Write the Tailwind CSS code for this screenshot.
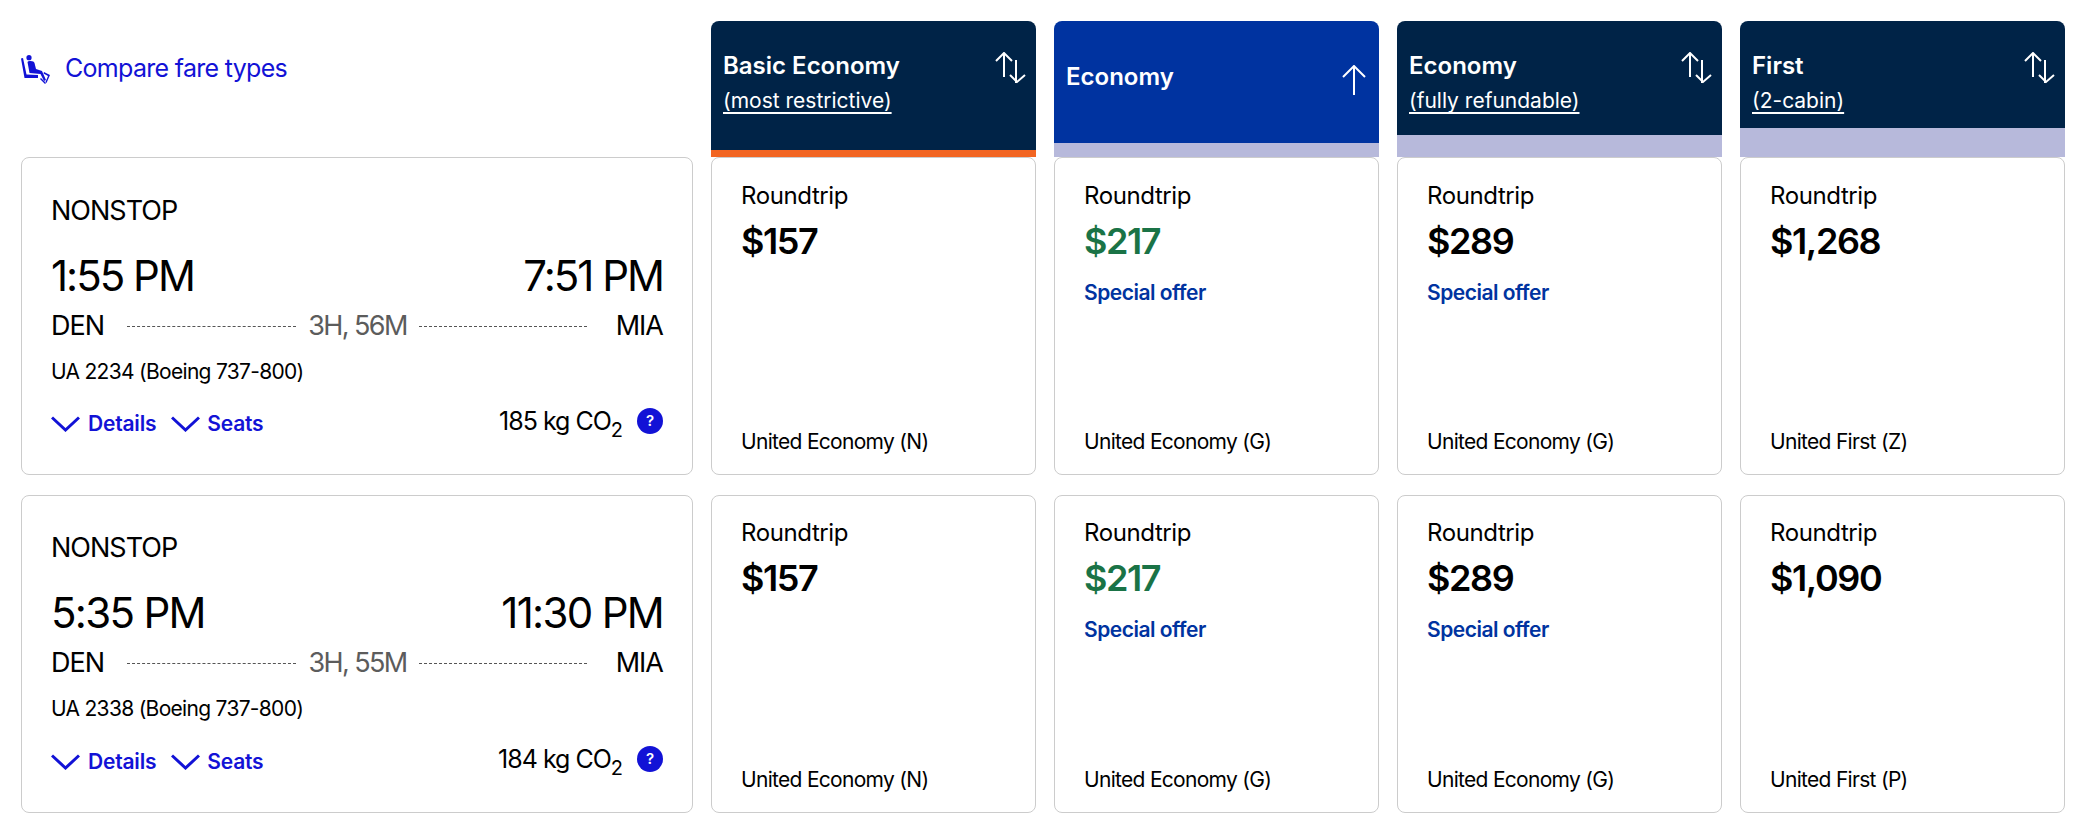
<!DOCTYPE html>
<html lang="en">
<head>
  <meta charset="UTF-8" />
  <title>Flight results</title>
  <script src="https://cdn.jsdelivr.net/npm/@tailwindcss/browser@4"></script>
</head>
<body class="bg-white font-['Inter',sans-serif] text-black overflow-hidden">
  <div class="grid grid-cols-[672px_repeat(4,325px)] gap-x-[18px] pl-[21px] pt-[21px]">

    <!-- Header row -->
    <a href="#" class="flex items-center gap-[14px] h-[136px] pb-[40px] text-[#1212d6] text-[25px] font-normal tracking-[-0.7px]">
      <svg class="w-[30px] h-[30px]" viewBox="3 3 30 30" fill="currentColor"><circle cx="11" cy="6.7" r="2.6"/><path d="M3 7.5 L5 7 L8.5 23.5 L20 24 L20 27 L6.5 27 Z"/><path d="M9.5 11 Q10 9.8 12.5 10 Q16 10 16.5 12 L18 18 L24 20 L28 29 L26 30 L22.5 23 L11.5 22 Z"/><path d="M23 27 L28 32 L27 33 L22 28 Z"/><path d="M26 21 L32 24 L28.5 32 L27.5 31 L30 25 L25.5 22.5 Z"/></svg>
      <span>Compare fare types</span>
    </a>

    <div class="flex flex-col h-[136px]">
      <div class="flex-1 bg-[#002347] rounded-t-lg text-white flex justify-between pl-[12px] pr-[9px] pt-[30px]">
        <div>
          <div class="text-[24px] leading-[30px] font-semibold">Basic Economy</div>
          <div class="text-[21px] leading-[26px] mt-[7px] underline decoration-2 underline-offset-[4px]">(most restrictive)</div>
        </div>
        <svg class="w-[32px] h-[32px] mt-[1px]" viewBox="0 0 32 32" fill="none" stroke="currentColor" stroke-width="2"><path d="M1 9 L9 1 L17 9 M9 1 V25"/><path d="M21 8 V31 M15 23 L22 30 L30 23"/></svg>
      </div>
      <div class="h-[7px] bg-[#f26522]"></div>
    </div>

    <div class="flex flex-col h-[136px]">
      <div class="flex-1 bg-[#0033a0] rounded-t-lg text-white flex justify-between items-start pl-[12px] pr-[12px] pt-[41px]">
        <div class="text-[24px] leading-[30px] font-semibold">Economy</div>
        <svg class="w-[26px] h-[30px] mt-[3px]" viewBox="0 0 26 30" fill="none" stroke="currentColor" stroke-width="2"><path d="M2 12 L13 1 L24 12 M13 1 V30"/></svg>
      </div>
      <div class="h-[14px] bg-[#b7b9db]"></div>
    </div>

    <div class="flex flex-col h-[136px]">
      <div class="flex-1 bg-[#002347] rounded-t-lg text-white flex justify-between pl-[12px] pr-[9px] pt-[30px]">
        <div>
          <div class="text-[24px] leading-[30px] font-semibold">Economy</div>
          <div class="text-[21px] leading-[26px] mt-[7px] underline decoration-2 underline-offset-[4px]">(fully refundable)</div>
        </div>
        <svg class="w-[32px] h-[32px] mt-[1px]" viewBox="0 0 32 32" fill="none" stroke="currentColor" stroke-width="2"><path d="M1 9 L9 1 L17 9 M9 1 V25"/><path d="M21 8 V31 M15 23 L22 30 L30 23"/></svg>
      </div>
      <div class="h-[22px] bg-[#b7b9db]"></div>
    </div>

    <div class="flex flex-col h-[136px]">
      <div class="flex-1 bg-[#002347] rounded-t-lg text-white flex justify-between pl-[12px] pr-[9px] pt-[30px]">
        <div>
          <div class="text-[24px] leading-[30px] font-semibold">First</div>
          <div class="text-[21px] leading-[26px] mt-[7px] underline decoration-2 underline-offset-[4px]">(2-cabin)</div>
        </div>
        <svg class="w-[32px] h-[32px] mt-[1px]" viewBox="0 0 32 32" fill="none" stroke="currentColor" stroke-width="2"><path d="M1 9 L9 1 L17 9 M9 1 V25"/><path d="M21 8 V31 M15 23 L22 30 L30 23"/></svg>
      </div>
      <div class="h-[29px] bg-[#b7b9db]"></div>
    </div>

    <!-- Flight 1 -->
    <div class="h-[318px] border border-[#cccccc] rounded-lg pl-[29px] pr-[29px] pt-[36px] flex flex-col">
      <div class="text-[27px] leading-[34px] tracking-[-1px]">NONSTOP</div>
      <div class="flex justify-between mt-[22px] text-[42px] leading-[52px] tracking-[-2px]"><span>1:55 PM</span><span>7:51 PM</span></div>
      <div class="flex items-center mt-[7px] text-[27px] leading-[34px] tracking-[-1px]">
        <span class="w-[76px]">DEN</span>
        <div class="w-[169px] border-t border-dashed border-[#555555]"></div>
        <span class="w-[123px] text-center text-[#5c5c5c] tracking-[-1.6px]">3H, 56M</span>
        <div class="w-[168px] border-t border-dashed border-[#555555]"></div>
        <span class="ml-auto">MIA</span>
      </div>
      <div class="mt-[15px] text-[21px] leading-[28px] tracking-[-0.7px]">UA 2234 (Boeing 737-800)</div>
      <div class="flex items-center mt-[21px]">
        <svg class="w-[29px] h-[16px] mr-[8px]" viewBox="0 0 29 16" fill="none" stroke="#1212d6" stroke-width="3"><path d="M1 1.5 L14.5 14 L28 1.5"/></svg>
        <span class="text-[#1212d6] text-[21px] font-semibold tracking-[-0.2px]">Details</span>
        <svg class="w-[29px] h-[16px] ml-[15px] mr-[7px]" viewBox="0 0 29 16" fill="none" stroke="#1212d6" stroke-width="3"><path d="M1 1.5 L14.5 14 L28 1.5"/></svg>
        <span class="text-[#1212d6] text-[21px] font-semibold tracking-[-0.2px]">Seats</span>
        <span class="ml-auto text-[25px] tracking-[-1px] -mt-[4px]">185 kg CO<sub class="text-[20px] align-[-7px] bottom-0">2</sub></span>
        <span class="ml-[15px] -mt-[5px] w-[26px] h-[26px] rounded-full bg-[#1212d6] text-white text-[15px] font-semibold flex items-center justify-center">?</span>
      </div>
    </div>

    <div class="h-[318px] border border-[#cccccc] rounded-lg pl-[29px] pt-[23px] flex flex-col">
      <div class="text-[24px] leading-[30px] tracking-[-0.4px]">Roundtrip</div>
      <div class="text-[36px] leading-[44px] font-semibold mt-[8px] tracking-[-1.4px]">$157</div>
      <div class="mt-auto mb-[18px] text-[21px] leading-[28px] tracking-[-0.7px]">United Economy (N)</div>
    </div>
    <div class="h-[318px] border border-[#cccccc] rounded-lg pl-[29px] pt-[23px] flex flex-col">
      <div class="text-[24px] leading-[30px] tracking-[-0.4px]">Roundtrip</div>
      <div class="text-[36px] leading-[44px] font-semibold mt-[8px] tracking-[-1.4px] text-[#1a7346]">$217</div>
      <div class="text-[21px] leading-[26px] font-semibold text-[#0033a0] mt-[17px] tracking-[-0.5px]">Special offer</div>
      <div class="mt-auto mb-[18px] text-[21px] leading-[28px] tracking-[-0.7px]">United Economy (G)</div>
    </div>
    <div class="h-[318px] border border-[#cccccc] rounded-lg pl-[29px] pt-[23px] flex flex-col">
      <div class="text-[24px] leading-[30px] tracking-[-0.4px]">Roundtrip</div>
      <div class="text-[36px] leading-[44px] font-semibold mt-[8px] tracking-[-1.4px]">$289</div>
      <div class="text-[21px] leading-[26px] font-semibold text-[#0033a0] mt-[17px] tracking-[-0.5px]">Special offer</div>
      <div class="mt-auto mb-[18px] text-[21px] leading-[28px] tracking-[-0.7px]">United Economy (G)</div>
    </div>
    <div class="h-[318px] border border-[#cccccc] rounded-lg pl-[29px] pt-[23px] flex flex-col">
      <div class="text-[24px] leading-[30px] tracking-[-0.4px]">Roundtrip</div>
      <div class="text-[36px] leading-[44px] font-semibold mt-[8px] tracking-[-1.4px]">$1,268</div>
      <div class="mt-auto mb-[18px] text-[21px] leading-[28px] tracking-[-0.7px]">United First (Z)</div>
    </div>

    <!-- Flight 2 -->
    <div class="mt-[20px] h-[318px] border border-[#cccccc] rounded-lg pl-[29px] pr-[29px] pt-[35px] flex flex-col">
      <div class="text-[27px] leading-[34px] tracking-[-1px]">NONSTOP</div>
      <div class="flex justify-between mt-[22px] text-[42px] leading-[52px] tracking-[-1.7px]"><span>5:35 PM</span><span>11:30 PM</span></div>
      <div class="flex items-center mt-[7px] text-[27px] leading-[34px] tracking-[-1px]">
        <span class="w-[76px]">DEN</span>
        <div class="w-[169px] border-t border-dashed border-[#555555]"></div>
        <span class="w-[123px] text-center text-[#5c5c5c] tracking-[-1.6px]">3H, 55M</span>
        <div class="w-[168px] border-t border-dashed border-[#555555]"></div>
        <span class="ml-auto">MIA</span>
      </div>
      <div class="mt-[15px] text-[21px] leading-[28px] tracking-[-0.7px]">UA 2338 (Boeing 737-800)</div>
      <div class="flex items-center mt-[22px]">
        <svg class="w-[29px] h-[16px] mr-[8px]" viewBox="0 0 29 16" fill="none" stroke="#1212d6" stroke-width="3"><path d="M1 1.5 L14.5 14 L28 1.5"/></svg>
        <span class="text-[#1212d6] text-[21px] font-semibold tracking-[-0.2px]">Details</span>
        <svg class="w-[29px] h-[16px] ml-[15px] mr-[7px]" viewBox="0 0 29 16" fill="none" stroke="#1212d6" stroke-width="3"><path d="M1 1.5 L14.5 14 L28 1.5"/></svg>
        <span class="text-[#1212d6] text-[21px] font-semibold tracking-[-0.2px]">Seats</span>
        <span class="ml-auto text-[25px] tracking-[-1px] -mt-[4px]">184 kg CO<sub class="text-[20px] align-[-7px] bottom-0">2</sub></span>
        <span class="ml-[15px] -mt-[5px] w-[26px] h-[26px] rounded-full bg-[#1212d6] text-white text-[15px] font-semibold flex items-center justify-center">?</span>
      </div>
    </div>

    <div class="mt-[20px] h-[318px] border border-[#cccccc] rounded-lg pl-[29px] pt-[22px] flex flex-col">
      <div class="text-[24px] leading-[30px] tracking-[-0.4px]">Roundtrip</div>
      <div class="text-[36px] leading-[44px] font-semibold mt-[8px] tracking-[-1.4px]">$157</div>
      <div class="mt-auto mb-[18px] text-[21px] leading-[28px] tracking-[-0.7px]">United Economy (N)</div>
    </div>
    <div class="mt-[20px] h-[318px] border border-[#cccccc] rounded-lg pl-[29px] pt-[22px] flex flex-col">
      <div class="text-[24px] leading-[30px] tracking-[-0.4px]">Roundtrip</div>
      <div class="text-[36px] leading-[44px] font-semibold mt-[8px] tracking-[-1.4px] text-[#1a7346]">$217</div>
      <div class="text-[21px] leading-[26px] font-semibold text-[#0033a0] mt-[17px] tracking-[-0.5px]">Special offer</div>
      <div class="mt-auto mb-[18px] text-[21px] leading-[28px] tracking-[-0.7px]">United Economy (G)</div>
    </div>
    <div class="mt-[20px] h-[318px] border border-[#cccccc] rounded-lg pl-[29px] pt-[22px] flex flex-col">
      <div class="text-[24px] leading-[30px] tracking-[-0.4px]">Roundtrip</div>
      <div class="text-[36px] leading-[44px] font-semibold mt-[8px] tracking-[-1.4px]">$289</div>
      <div class="text-[21px] leading-[26px] font-semibold text-[#0033a0] mt-[17px] tracking-[-0.5px]">Special offer</div>
      <div class="mt-auto mb-[18px] text-[21px] leading-[28px] tracking-[-0.7px]">United Economy (G)</div>
    </div>
    <div class="mt-[20px] h-[318px] border border-[#cccccc] rounded-lg pl-[29px] pt-[22px] flex flex-col">
      <div class="text-[24px] leading-[30px] tracking-[-0.4px]">Roundtrip</div>
      <div class="text-[36px] leading-[44px] font-semibold mt-[8px] tracking-[-1.4px]">$1,090</div>
      <div class="mt-auto mb-[18px] text-[21px] leading-[28px] tracking-[-0.7px]">United First (P)</div>
    </div>
  </div>
</body>
</html>
